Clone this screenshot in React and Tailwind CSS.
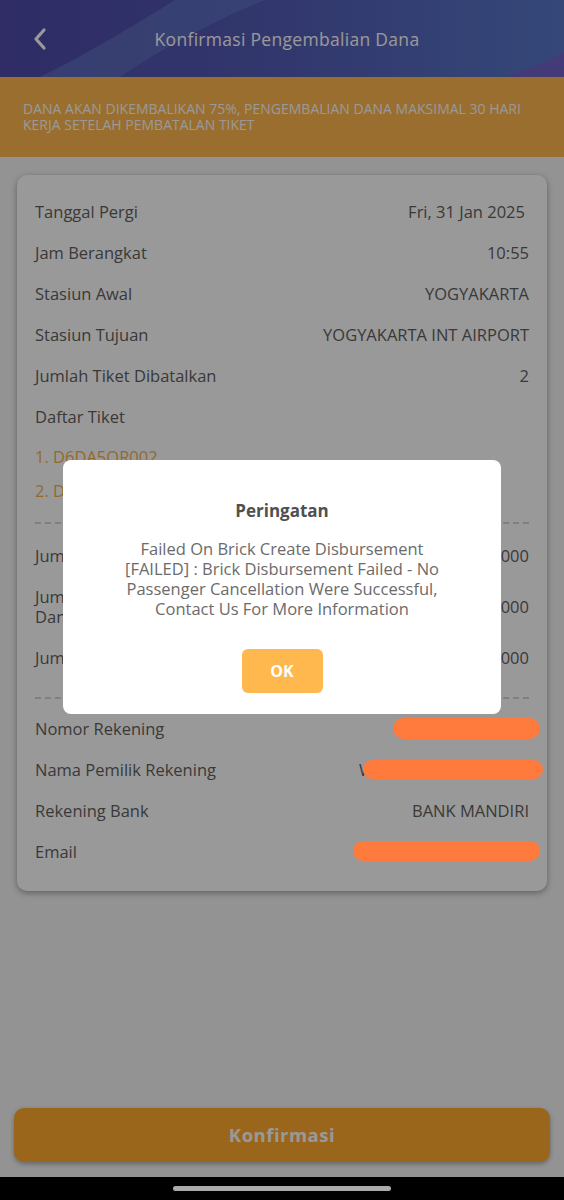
import React from "react";

function Row({ label, value, children, className = "py-[10px] leading-[21px]" }) {
  return (
    <div className={`relative flex items-center justify-between gap-4 ${className}`}>
      <span>{label}</span>
      <span className="text-right whitespace-nowrap">{value}</span>
      {children}
    </div>
  );
}

function Dash({ className = "" }) {
  return <div className={`border-t-2 border-dashed border-[#d4d4d4] ${className}`} />;
}

function Scribble({ className }) {
  return <div className={`absolute z-30 rounded-full bg-[#ff7a3d] ${className}`} />;
}

export default function App() {
  return (
    <div className="w-[564px] h-[1200px] flex flex-col bg-black font-['Open_Sans','Noto_Sans',sans-serif] overflow-hidden">
      {/* APP */}
      <div className="relative h-[1177px] flex flex-col bg-[#f5f5f5]">
        {/* HEADER */}
        <div className="relative h-[77px] flex items-center overflow-hidden bg-[linear-gradient(90deg,#4f4aaa_0%,#5257b2_45%,#5b84d2_100%)]">
          <svg
            className="absolute inset-0"
            width="564"
            height="77"
            viewBox="0 0 564 77"
            preserveAspectRatio="none"
          >
            <path d="M175 0 C 130 28, 85 55, 40 77 L 120 77 C 160 50, 210 22, 265 0 Z" fill="#6a8ad0" fillOpacity="0.45" />
            <path d="M265 0 C 210 22, 160 50, 120 77 L 564 77 L 564 0 Z" fill="#5560b8" fillOpacity="0.35" />
            <path d="M505 77 C 530 68, 550 60, 564 52 L 564 77 Z" fill="#6f63c8" />
          </svg>
          <div className="relative w-[76px] flex justify-center pl-[3px]">
            <svg width="16" height="24" viewBox="0 0 16 24" fill="none">
              <path d="M12 3 L4 12 L12 21" stroke="#ffffff" strokeWidth="3.2" strokeLinecap="round" strokeLinejoin="round" />
            </svg>
          </div>
          <div className="relative flex-1 pr-[66px] text-center text-white text-[17.5px] leading-[22px] tracking-[0.3px]">
            Konfirmasi Pengembalian Dana
          </div>
        </div>

        {/* INFO BANNER */}
        <div className="h-[80px] bg-[#ffb74d] px-[23px] pt-[24px] text-[14px] leading-[16px] text-white uppercase">
          Dana akan dikembalikan 75%, pengembalian dana maksimal 30 hari kerja setelah pembatalan tiket
        </div>

        {/* CARD */}
        <div className="px-[17px] pt-[18px]">
          <div className="bg-white rounded-[10px] shadow-[0_2px_6px_rgba(0,0,0,0.35)] px-[18px] pt-[16px] pb-[19px] text-[16.5px] text-[#5f5f5f]">
            <Row label="Tanggal Pergi" value={<span className="pr-[4px]">Fri, 31 Jan 2025</span>} />
            <Row label="Jam Berangkat" value="10:55" />
            <Row label="Stasiun Awal" value="YOGYAKARTA" />
            <Row label="Stasiun Tujuan" value="YOGYAKARTA INT AIRPORT" />
            <Row label="Jumlah Tiket Dibatalkan" value="2" />
            <Row label="Daftar Tiket" value="" />

            <div className="mt-[10px] flex flex-col gap-[14px] leading-[20px] text-[#f5b052]">
              <div>1. D6DA5QR002</div>
              <div>2. D6DA5QR003</div>
            </div>

            <Dash className="mt-[21px]" />

            <div className="mt-[12px] flex flex-col gap-[1px]">
              <Row className="py-[10px] leading-[20px]" label="Jumlah Harga Tiket" value="Rp 400.000" />
              <Row
                className="py-[10px] leading-[20px]"
                label={
                  <>
                    Jumlah Pengembalian
                    <br />
                    Dana
                  </>
                }
                value="Rp 300.000"
              />
              <Row className="py-[10px] leading-[20px]" label="Jumlah Biaya Pembatalan" value="Rp 100.000" />
            </div>

            <Dash className="mt-[19px]" />

            <div className="mt-[9px]">
              <Row label="Nomor Rekening" value="1370012345678">
                <Scribble className="right-[-11px] top-[10px] w-[147px] h-[21px]" />
              </Row>
              <Row label="Nama Pemilik Rekening" value="WAHYU ADI PRATAMA">
                <Scribble className="right-[-14px] top-[11px] w-[180px] h-[19px]" />
              </Row>
              <Row label="Rekening Bank" value="BANK MANDIRI" />
              <Row label="Email" value="adi.r21@mail.com">
                <Scribble className="right-[-11px] top-[10px] w-[187px] h-[20px]" />
              </Row>
            </div>
          </div>
        </div>

        <div className="flex-1" />

        {/* BOTTOM BUTTON */}
        <div className="px-[14px] pb-[15px]">
          <div className="h-[54px] rounded-[10px] bg-[#ffab2e] shadow-[0_2px_5px_rgba(0,0,0,0.3)] flex items-center justify-center text-white text-[18.5px] leading-[22px] font-bold tracking-[0.5px]">
            Konfirmasi
          </div>
        </div>

        {/* DIM OVERLAY + DIALOG */}
        <div className="absolute inset-0 z-20 bg-black/40">
          <div className="absolute left-[63px] top-[460px] w-[438px] h-[254px] bg-white rounded-[8px] flex flex-col items-center pt-[40px]">
            <div className="text-[17px] leading-[22px] font-bold text-[#505050]">Peringatan</div>
            <div className="mt-[17px] text-center text-[16.5px] leading-[20px] text-[#6b6b6b] whitespace-nowrap">
              Failed On Brick Create Disbursement
              <br />
              [FAILED] : Brick Disbursement Failed - No
              <br />
              Passenger Cancellation Were Successful,
              <br />
              Contact Us For More Information
            </div>
            <div className="mt-[30px] w-[81px] h-[44px] rounded-[6px] bg-[#ffb84d] flex items-center justify-center text-white text-[16px] leading-[20px] font-bold">
              OK
            </div>
          </div>
        </div>
      </div>

      {/* SYSTEM NAV BAR */}
      <div className="h-[23px] bg-black flex items-center justify-center">
        <div className="w-[218px] h-[5px] rounded-full bg-[#aaaaaa]" />
      </div>
    </div>
  );
}
